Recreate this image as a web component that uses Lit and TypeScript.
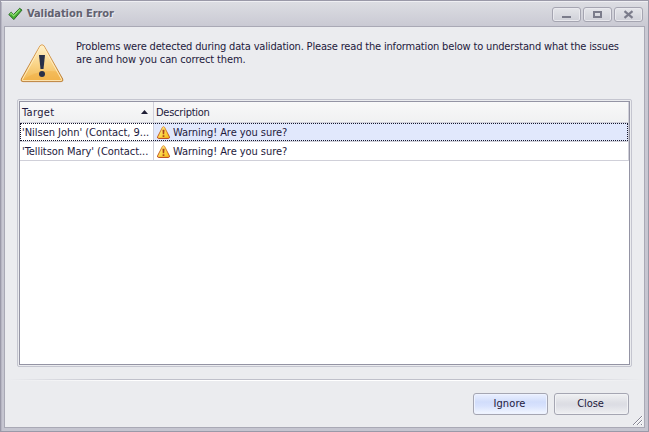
import { LitElement, html, css } from "lit";
import { customElement, property } from "lit/decorators.js";

@customElement("warning-icon")
class WarningIcon extends LitElement {
  static styles = css`
    :host { display: block; width: 13px; height: 13px; flex: none; }
    svg { display: block; width: 100%; height: 100%; }
  `;
  render() {
    return html`<svg viewBox="0 0 13 13">
      <defs>
        <linearGradient id="f" x1="0" y1="0" x2="1" y2="1">
          <stop offset="0" stop-color="#fff3a8" /><stop offset=".5" stop-color="#fcd84a" /><stop offset="1" stop-color="#f8ba10" />
        </linearGradient>
        <linearGradient id="s" x1="0" y1="0" x2="0" y2="1">
          <stop offset="0" stop-color="#e39b3c" /><stop offset="1" stop-color="#b8401a" />
        </linearGradient>
      </defs>
      <path d="M5.5 1.2Q6.5 .1 7.5 1.2L12.4 10.8Q12.7 12.4 11.6 12.4H1.4Q.3 12.4.6 10.8Z" fill="url(#f)" stroke="url(#s)" />
      <path d="M5.5 3.8H7.5L7.2 8.3H5.8Z" fill="#a8401a" />
      <rect x="5.6" y="9.3" width="1.8" height="1.6" fill="#a8401a" />
    </svg>`;
  }
}

@customElement("app-root")
class AppRoot extends LitElement {
  @property({ attribute: false }) rows = [
    { target: "'Nilsen John' (Contact, 9...", cls: "t1", selected: true },
    { target: "'Tellitson Mary' (Contact...", cls: "t2", selected: false },
  ];

  static styles = css`
    :host {
      display: block; height: 432px; color: #1e1a3c;
      font: 11px/13px "DejaVu Sans Condensed", "DejaVu Sans", sans-serif; font-stretch: condensed;
    }
    * { box-sizing: border-box; }
    svg { display: block; flex: none; }
    span, .line { white-space: nowrap; }
    .m1 { letter-spacing: -0.171px; }
    .m2 { letter-spacing: -0.12px; }
    .h1 { letter-spacing: 0.35px; }
    .h2 { letter-spacing: -0.25px; }
    .t1 { letter-spacing: -0.03px; }
    .t2 { letter-spacing: -0.06px; }
    .w { letter-spacing: -0.06px; }
    .bi { letter-spacing: 0.1px; }
    .bc { letter-spacing: -0.1px; }
    .window {
      height: 432px; padding: 0 3px 3px; display: flex; flex-direction: column;
      border: 1px solid #9a99a8; background: linear-gradient(#dddee3, #c9c9d3 26px, #c5c5d0);
      box-shadow: inset 0 1px #efeff3, inset 1px 0 #b7b6c3;
    }
    .titlebar { height: 25px; flex: none; display: flex; align-items: center; padding: 1px 2px 0 4px; }
    .title { flex: 1; margin: -1px 0 0 4px; letter-spacing: -0.06px; font-weight: bold; color: #62616f; text-shadow: 1px 1px #ececf1; }
    .caption {
      width: 29px; height: 15px; margin-left: 2px; border: 1px solid #a5a5b1; border-radius: 3px;
      background: linear-gradient(#e5e6ea, #cfd0d8); box-shadow: inset 0 0 0 1px #e9e9ee;
      display: flex; align-items: center; justify-content: center;
    }
    .client {
      flex: 1; min-height: 0; background: #ebecef; border: 1px solid #a9a9b5;
      display: flex; flex-direction: column; padding: 0 12px; position: relative;
    }
    .message { display: flex; height: 72px; flex: none; }
    .big { margin: 17px 0 0 3px; }
    .copy { margin: 13px 0 0 12px; }
    .frame {
      flex: none; height: 268px; border: 1px solid #c4c5cf; border-radius: 2px; padding: 1px;
    }
    .grid { height: 264px; border: 1px solid #9494a4; background: #fff; }
    .head, .row { display: grid; grid-template-columns: 134px 1fr; }
    .head { height: 21px; border-bottom: 1px solid #d0d0d9; background: linear-gradient(#f8f8f8, #f0f1f2); }
    .cell { display: flex; align-items: center; padding: 0 2px; border-right: 1px solid #d0d0d9; min-width: 0; }
    .head .cell:first-child { justify-content: space-between; padding-right: 5px; }
    .row { height: 19px; border-bottom: 1px solid #d0d0d9; position: relative; }
    .row .description { padding-left: 3px; gap: 3px; }
    .selected .description { background: #e1e8fc; }
    .focus { position: absolute; inset: 0 1px 0 0; border: 1px dotted #17172c; }
    .rule {
      flex: none; height: 2px; margin: 12px -10px 0;
      background: linear-gradient(90deg, transparent, #fff 20%, #fff 80%, transparent) 0 1px / 100% 1px no-repeat,
        linear-gradient(90deg, transparent, #bfc0ca 18%, #bfc0ca 82%, transparent) 0 0 / 100% 1px no-repeat;
    }
    .actions { display: flex; justify-content: flex-end; gap: 6px; margin: 12px 3px 0 0; }
    .button {
      width: 75px; height: 22px; border: 1px solid #a5a6b2; border-radius: 3px; text-align: center;
      line-height: 20px; padding-right: 2px;
      background: linear-gradient(#f0f1f3, #dddee4 45%, #dcdde4 55%, #eff0f2); box-shadow: inset 0 0 0 1px #f1f2f5;
    }
    .default { background: linear-gradient(#ebf0ff, #d1ddfb 40%, #d8e2fd 60%, #f4f8ff); box-shadow: inset 0 0 0 1px #edf2ff; }
    .grip { position: absolute; right: 1px; bottom: 1px; }
  `;

  render() {
    return html`<div class="window">
      <div class="titlebar">
        <svg width="15" height="14" viewBox="0 0 15 14">
          <path d="M.8 7.5L3.2 5.2L5.6 7.5L11.6 1.3L14 3.1L5.8 12.6Z" fill="#45ad32" stroke="#2a6b26" stroke-linejoin="round" />
          <path d="M2.1 7.3L3.3 6.3L5.6 8.9L11.8 2.5" fill="none" stroke="#8fdf74" stroke-width="1.1" />
        </svg>
        <span class="title">Validation Error</span>
        <div class="caption"><svg width="11" height="11"><rect x="1" y="7" width="9" height="2" fill="#7b7c8b" /></svg></div>
        <div class="caption"><svg width="11" height="11"><rect x="2" y="3" width="7" height="5" fill="none" stroke="#7b7c8b" stroke-width="2" /></svg></div>
        <div class="caption"><svg width="11" height="11"><path d="M1.5 2.2L9.5 8.8M9.5 2.2L1.5 8.8" stroke="#7b7c8b" stroke-width="2.2" /></svg></div>
      </div>
      <div class="client">
        <div class="message">
          <svg class="big" width="44" height="40" viewBox="0 0 44 40">
            <defs>
              <linearGradient id="g" x1="0" y1="0" x2="0" y2="1"><stop offset="0" stop-color="#fff2ce" /><stop offset=".5" stop-color="#fad68b" /><stop offset="1" stop-color="#f2b750" /></linearGradient>
              <linearGradient id="b" x1="0" y1="0" x2="0" y2="1"><stop offset="0" stop-color="#dda35a" /><stop offset="1" stop-color="#b77b36" /></linearGradient>
            </defs>
            <path d="M20 1.7Q22 -.3 24 1.7L42.7 35Q43.6 37.4 41.2 37.6H2.8Q.4 37.4 1.3 35Z" fill="url(#g)" stroke="url(#b)" />
            <path d="M2.5 36Q18 25 37.5 27.5L41.5 35V36.5H2.5Z" fill="#f0ab3b" opacity=".4" />
            <path d="M20.6 2.9Q22 1.5 23.4 2.9L41.5 35.3Q42 36.5 41 36.6H3Q2 36.5 2.5 35.3Z" fill="none" stroke="#ffeec4" stroke-width=".9" />
            <path d="M19 11H25L23.5 25H20.5Z" fill="#293048" /><circle cx="22" cy="30" r="3" fill="#293048" />
          </svg>
          <div class="copy">
            <div class="line"><span class="m1">Problems were detected during data validation. Please read the information below to understand what the issues</span></div>
            <div class="line"><span class="m2">are and how you can correct them.</span></div>
          </div>
        </div>
        <div class="frame"><div class="grid">
          <div class="head">
            <div class="cell"><span class="h1">Target</span><svg width="7" height="4"><path d="M0 4L3.5 0L7 4Z" fill="#201f35" /></svg></div>
            <div class="cell"><span class="h2">Description</span></div>
          </div>
          ${this.rows.map((r) => html`<div class="row ${r.selected ? "selected" : ""}">
            <div class="cell"><span class=${r.cls}>${r.target}</span></div>
            <div class="cell description"><warning-icon></warning-icon><span class="w">Warning! Are you sure?</span></div>
            ${r.selected ? html`<div class="focus"></div>` : ""}
          </div>`)}
        </div></div>
        <div class="rule"></div>
        <div class="actions">
          <div class="button default"><span class="bi">Ignore</span></div>
          <div class="button"><span class="bc">Close</span></div>
        </div>
        <svg class="grip" width="11" height="11"><path d="M1 10L10 1M5 10L10 5M9 10L10 9" stroke="#fff" transform="translate(1 0)" /><path d="M1 10L10 1M5 10L10 5M9 10L10 9" stroke="#858594" /></svg>
      </div>
    </div>`;
  }
}
